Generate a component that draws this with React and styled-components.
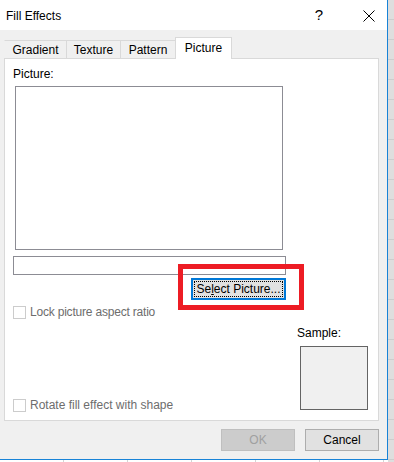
import React from 'react';
import styled, { createGlobalStyle } from 'styled-components';

const GlobalStyle = createGlobalStyle`
  html, body {
    margin: 0;
    padding: 0;
  }
  body {
    font-family: "Liberation Sans", Arial, sans-serif;
    font-size: 12px;
    color: #000;
  }
`;

const Screen = styled.div`
  width: 394px;
  height: 462px;
  overflow: hidden;
  background-color: #fff;
  background-image:
    linear-gradient(to right, transparent 0 388px, rgba(200, 200, 200, 0.6) 388px),
    repeating-linear-gradient(to bottom, transparent 0 19px, #d4d4d4 19px 20px),
    repeating-linear-gradient(to right, transparent 0 63px, #d4d4d4 63px 64px);
`;

const Dialog = styled.div`
  width: 387px;
  height: 459px;
  display: flex;
  flex-direction: column;
  background: #f0f0f0;
  border-right: 1px solid #1883d7;
  border-bottom: 1px solid #1883d7;
`;

const TitleBar = styled.div`
  height: 30px;
  flex-shrink: 0;
  display: flex;
  align-items: center;
  background: #fff;
  padding: 0 12px 0 6px;
`;

const Title = styled.div`
  flex: 1;
  font-size: 12px;
  padding-top: 1px;
`;

const HelpGlyph = styled.div`
  font-size: 15px;
  margin-right: 40px;
  padding-bottom: 1px;
`;

const CloseIcon = styled.svg`
  width: 12px;
  height: 12px;
  display: block;
  margin-top: 1px;
`;

const Body = styled.div`
  flex: 1;
  display: flex;
  flex-direction: column;
  padding: 7px 8px 0 4px;
`;

const TabStrip = styled.div`
  display: flex;
  align-items: flex-end;
  height: 21px;
`;

const Tab = styled.div`
  box-sizing: border-box;
  width: ${p => p.$w}px;
  height: ${p => (p.$active ? 22 : 18)}px;
  margin-bottom: ${p => (p.$active ? -1 : 0)}px;
  position: relative;
  z-index: ${p => (p.$active ? 1 : 0)};
  display: flex;
  align-items: center;
  justify-content: center;
  padding: ${p => (p.$active ? '0 0 2px' : '1px 0 0')};
  background: ${p => (p.$active ? '#fff' : '#f0f0f0')};
  border: 1px solid #d9d9d9;
  border-bottom: none;
  border-left-color: ${p => (p.$first ? 'transparent' : '#d9d9d9')};
  margin-left: ${p => (p.$first ? 0 : -1)}px;
  font-size: 12px;
`;

const Panel = styled.div`
  position: relative;
  box-sizing: border-box;
  height: 363px;
  background: #fff;
  border: 1px solid #d9d9d9;
  padding: 8px 0 0 8px;
  display: flex;
  flex-direction: column;
  align-items: flex-start;
`;

const FieldLabel = styled.div`
  line-height: 15px;
`;

const PictureBox = styled.div`
  box-sizing: border-box;
  width: 268px;
  height: 164px;
  margin: 4px 0 0 2px;
  border: 1px solid #8c8c94;
`;

const PathField = styled.div`
  box-sizing: border-box;
  width: 273px;
  height: 19px;
  margin-top: 6px;
  border: 1px solid #8c8c94;
`;

const PushButton = styled.div`
  box-sizing: border-box;
  width: ${p => p.$w || 74}px;
  height: 22px;
  display: flex;
  align-items: center;
  justify-content: center;
  font-size: 12px;
  background: ${p => (p.$disabled ? '#cccccc' : '#e1e1e1')};
  color: ${p => (p.$disabled ? '#a0a0a0' : '#000')};
  border: ${p => (p.$focused ? '2px solid #0078d7' : `1px solid ${p.$disabled ? '#bfbfbf' : '#adadad'}`)};
`;

const FocusRing = styled.div`
  box-sizing: border-box;
  width: calc(100% - 2px);
  height: calc(100% - 2px);
  display: flex;
  align-items: center;
  justify-content: center;
  border: 1px dotted #000;
`;

const AccessKey = styled.span`
  text-decoration: underline;
`;

const SelectRow = styled.div`
  margin: 3px 0 0 178px;
`;

const Lower = styled.div`
  align-self: stretch;
  display: flex;
  margin-top: 6px;
  height: 106px;
`;

const Options = styled.div`
  flex: 1;
  display: flex;
  flex-direction: column;
  justify-content: space-between;
`;

const CheckRow = styled.label`
  display: flex;
  align-items: center;
  gap: 4px;
  color: #6d6d6d;
  line-height: 13px;
  letter-spacing: ${p => p.$tight ? '-0.2px' : '0'};
`;

const CheckBox = styled.span`
  box-sizing: border-box;
  width: 13px;
  height: 13px;
  border: 1px solid #cccccc;
  background: #fff;
`;

const SampleCol = styled.div`
  display: flex;
  flex-direction: column;
  justify-content: flex-end;
  margin-right: 10px;
  padding-bottom: 2px;
`;

const SampleBox = styled.div`
  box-sizing: border-box;
  width: 68px;
  height: 64px;
  margin: 5px 0 0 3px;
  background: #f0f0f0;
  border: 1px solid #646464;
`;

const Highlight = styled.div`
  position: absolute;
  left: 173px;
  top: 205px;
  width: 126px;
  height: 46px;
  box-sizing: border-box;
  border: 5px solid #ed1c24;
  pointer-events: none;
`;

const Footer = styled.div`
  display: flex;
  justify-content: flex-end;
  gap: 10px;
  margin-top: 8px;
`;

const tabs = [
  { label: 'Gradient', w: 63 },
  { label: 'Texture', w: 55 },
  { label: 'Pattern', w: 56 },
  { label: 'Picture', w: 57, active: true },
];

export default function App() {
  return (
    <Screen>
      <GlobalStyle />
      <Dialog>
        <TitleBar>
          <Title>Fill Effects</Title>
          <HelpGlyph>?</HelpGlyph>
          <CloseIcon viewBox="0 0 12 12">
            <path d="M0.5 0.5 L11.5 11.5 M11.5 0.5 L0.5 11.5" stroke="#000" strokeWidth="1" fill="none" />
          </CloseIcon>
        </TitleBar>
        <Body>
          <TabStrip>
            {tabs.map((t, i) => (
              <Tab key={t.label} $w={t.w} $active={t.active} $first={i === 0}>
                {t.label}
              </Tab>
            ))}
          </TabStrip>
          <Panel>
            <FieldLabel>Picture:</FieldLabel>
            <PictureBox />
            <PathField />
            <SelectRow>
              <PushButton $w={95} $focused>
                <FocusRing>
                  Se<AccessKey>l</AccessKey>ect Picture...
                </FocusRing>
              </PushButton>
            </SelectRow>
            <Lower>
              <Options>
                <CheckRow $tight>
                  <CheckBox />
                  Lock picture aspect ratio
                </CheckRow>
                <CheckRow>
                  <CheckBox />
                  Rotate fill effect with shape
                </CheckRow>
              </Options>
              <SampleCol>
                <FieldLabel>Sample:</FieldLabel>
                <SampleBox />
              </SampleCol>
            </Lower>
            <Highlight />
          </Panel>
          <Footer>
            <PushButton $disabled>OK</PushButton>
            <PushButton>Cancel</PushButton>
          </Footer>
        </Body>
      </Dialog>
    </Screen>
  );
}
